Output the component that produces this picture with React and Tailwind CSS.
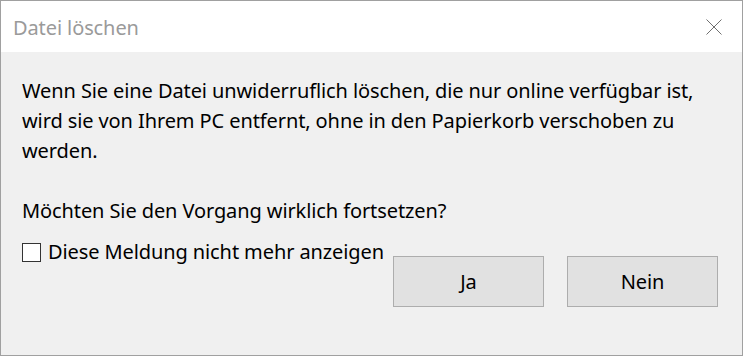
import React from 'react';

const DeleteDialog = () => {
  return (
    <div className="w-[743px] h-[356px] border border-[#a0a0a0] bg-[#f0f0f0] flex flex-col font-['Noto_Sans',sans-serif] text-black overflow-hidden">
      {/* Title bar */}
      <div className="h-[51px] bg-white flex items-center justify-between pl-[12px] pr-[20px] shrink-0">
        <span className="text-[20px] text-[#9a9a9a] leading-none mt-[2px] tracking-[-0.1px]">Datei löschen</span>
        <svg width="16" height="16" viewBox="0 0 16 16" className="mt-[1px]">
          <path d="M0.5 0.5 L15.5 15.5 M15.5 0.5 L0.5 15.5" stroke="#6f6f6f" strokeWidth="1" fill="none" />
        </svg>
      </div>

      {/* Body */}
      <div className="flex-1 pl-[21px] pr-[24px] pt-[24px] text-[20px] leading-[30px] tracking-[-0.1px]">
        <p>
          Wenn Sie eine Datei unwiderruflich löschen, die nur online verfügbar ist,
          wird sie von Ihrem PC entfernt, ohne in den Papierkorb verschoben zu
          werden.
        </p>
        <p className="mt-[30px]">Möchten Sie den Vorgang wirklich fortsetzen?</p>

        <div className="flex items-start justify-between mt-[11px]">
          <label className="flex items-center gap-[7px]">
            <span className="w-[19px] h-[19px] border border-[#333333] bg-white shrink-0" />
            <span>Diese Meldung nicht mehr anzeigen</span>
          </label>
          <div className="flex gap-[23px] mt-[19px]">
            <button className="w-[151px] h-[51px] bg-[#e1e1e1] border border-[#adadad] text-[20px]">Ja</button>
            <button className="w-[151px] h-[51px] bg-[#e1e1e1] border border-[#adadad] text-[20px]">Nein</button>
          </div>
        </div>
      </div>
    </div>
  );
};

export default function App() {
  return <DeleteDialog />;
}
